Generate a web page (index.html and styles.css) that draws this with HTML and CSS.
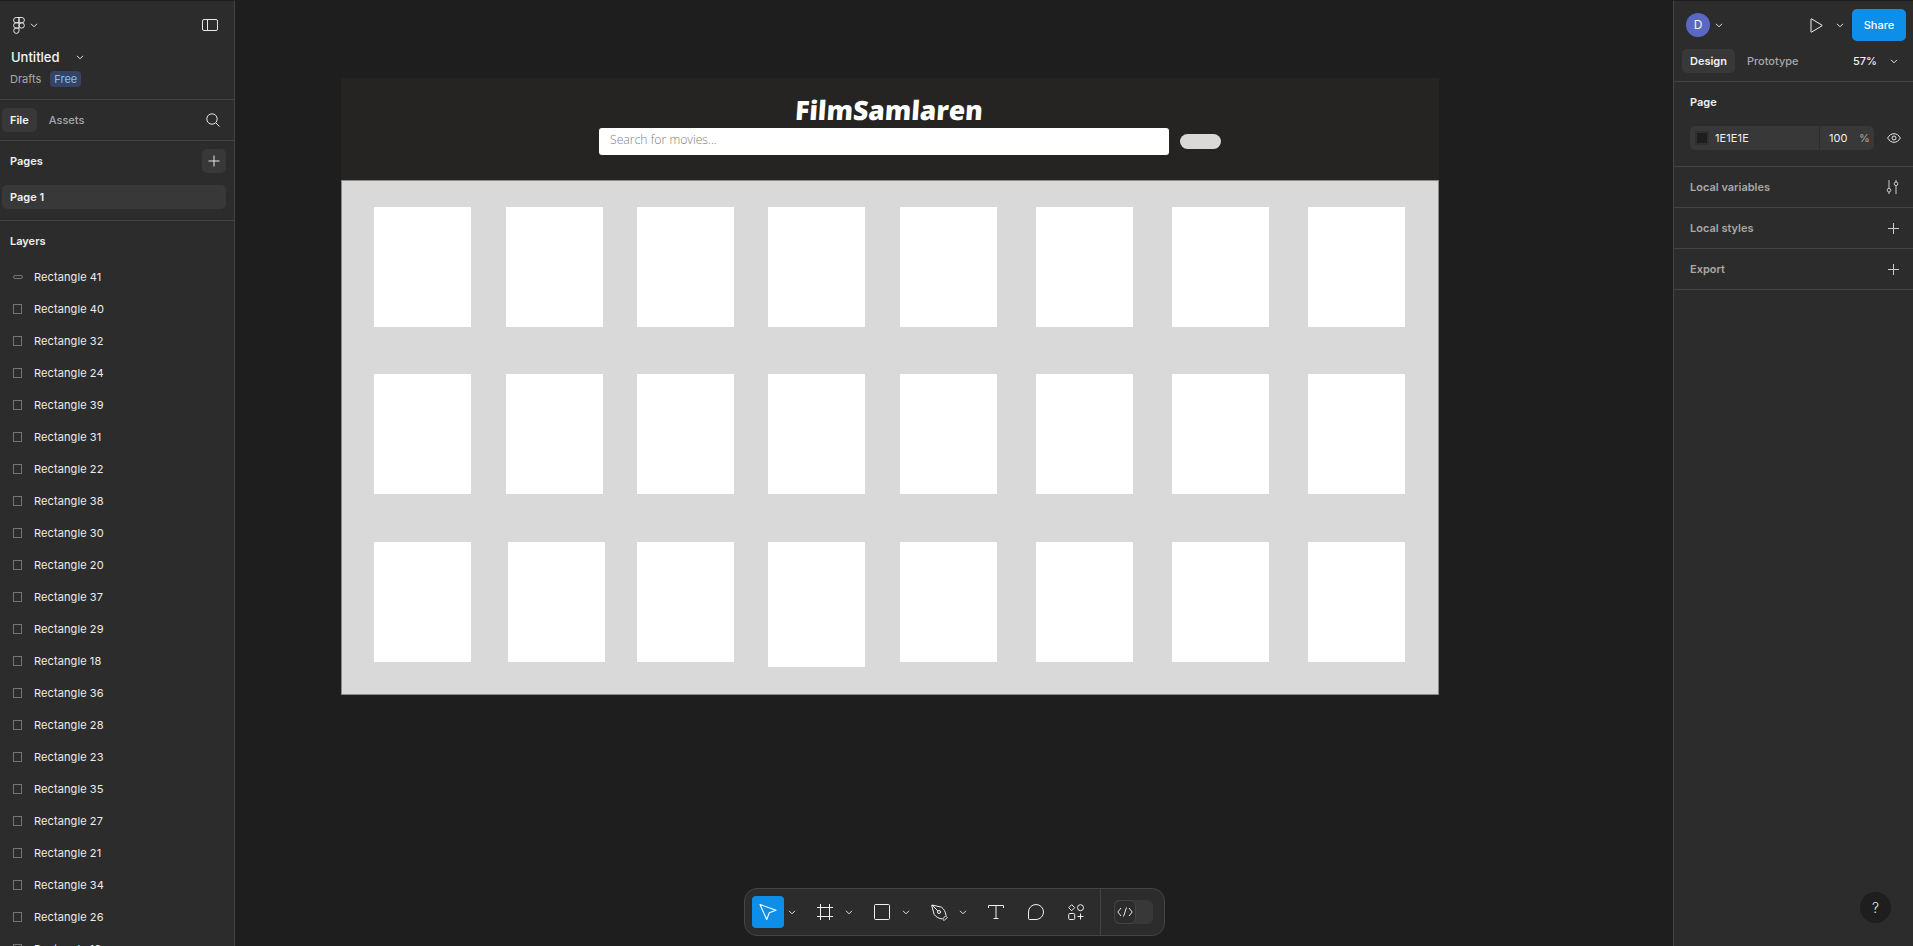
FILE: index.html
```html
<!DOCTYPE html>
<html lang="en">
<head>
  <meta charset="UTF-8">
  <title>Untitled - Figma</title>
  <link rel="stylesheet" href="styles.css">
</head>
<body>
  <div class="app">
    <!-- Left panel -->
    <aside class="left-panel">
      <div class="file-head">
        <div class="logo-row">
          <div class="logo-wrap">
            <svg class="logo" width="12" height="17" viewBox="0 0 12 17" fill="none" stroke="#e6e6e6" stroke-width="1">
              <path d="M6 .5H3.25a2.6 2.6 0 0 0 0 5.3H6z"/>
              <path d="M6 .5h2.75a2.6 2.6 0 0 1 0 5.3H6z"/>
              <path d="M6 5.8H3.25a2.6 2.6 0 0 0 0 5.3H6z"/>
              <circle cx="8.7" cy="8.45" r="2.65"/>
              <path d="M3.25 11.1H6v2.7a2.65 2.65 0 1 1-2.75-2.7z"/>
            </svg>
            <svg class="chev" width="8" height="8" viewBox="0 0 8 8"><path d="M1 2.800l3 3 3-3" fill="none" stroke="#e6e6e6"/></svg>
          </div>
          <svg width="16" height="12" viewBox="0 0 16 12" fill="none" stroke="#e6e6e6"><rect x=".5" y=".5" width="15" height="11" rx="1.500"/><path d="M5.500 .5v11"/></svg>
        </div>
        <div class="title-row">
          <span class="title">Untitled</span>
          <svg class="chev" width="8" height="8" viewBox="0 0 8 8"><path d="M1 2.800l3 3 3-3" fill="none" stroke="#e6e6e6"/></svg>
        </div>
        <div class="sub-row">
          <span class="drafts">Drafts</span>
          <span class="badge">Free</span>
        </div>
      </div>

      <div class="tabs-row">
        <span class="tab tab-active">File</span>
        <span class="tab tab-muted">Assets</span>
        <svg class="search-icon" width="14" height="14" viewBox="0 0 14 14" fill="none" stroke="#e6e6e6"><circle cx="6" cy="6" r="5.200"/><path d="M9.800 9.800l3.700 3.700"/></svg>
      </div>

      <div class="pages">
        <div class="pages-head">
          <span class="section-label">Pages</span>
          <span class="add-page">
            <svg width="12" height="12" viewBox="0 0 12 12" stroke="#e6e6e6"><path d="M6 .5v11M.5 6h11"/></svg>
          </span>
        </div>
        <div class="page-row">Page 1</div>
      </div>

      <div class="layers">
        <div class="section-label layers-label">Layers</div>
        <ul class="layer-list">
          <li class="layer"><i class="layer-icon pill"></i>Rectangle 41</li>
          <li class="layer"><i class="layer-icon"></i>Rectangle 40</li>
          <li class="layer"><i class="layer-icon"></i>Rectangle 32</li>
          <li class="layer"><i class="layer-icon"></i>Rectangle 24</li>
          <li class="layer"><i class="layer-icon"></i>Rectangle 39</li>
          <li class="layer"><i class="layer-icon"></i>Rectangle 31</li>
          <li class="layer"><i class="layer-icon"></i>Rectangle 22</li>
          <li class="layer"><i class="layer-icon"></i>Rectangle 38</li>
          <li class="layer"><i class="layer-icon"></i>Rectangle 30</li>
          <li class="layer"><i class="layer-icon"></i>Rectangle 20</li>
          <li class="layer"><i class="layer-icon"></i>Rectangle 37</li>
          <li class="layer"><i class="layer-icon"></i>Rectangle 29</li>
          <li class="layer"><i class="layer-icon"></i>Rectangle 18</li>
          <li class="layer"><i class="layer-icon"></i>Rectangle 36</li>
          <li class="layer"><i class="layer-icon"></i>Rectangle 28</li>
          <li class="layer"><i class="layer-icon"></i>Rectangle 23</li>
          <li class="layer"><i class="layer-icon"></i>Rectangle 35</li>
          <li class="layer"><i class="layer-icon"></i>Rectangle 27</li>
          <li class="layer"><i class="layer-icon"></i>Rectangle 21</li>
          <li class="layer"><i class="layer-icon"></i>Rectangle 34</li>
          <li class="layer"><i class="layer-icon"></i>Rectangle 26</li>
          <li class="layer"><i class="layer-icon"></i>Rectangle 19</li>
        </ul>
      </div>
    </aside>

    <!-- Canvas with the design frame -->
    <main class="canvas">
      <div class="frame">
        <header class="frame-head">
          <div class="brand">FilmSamlaren</div>
          <div class="search-row">
            <div class="search-box">Search for movies...</div>
            <div class="search-btn"></div>
          </div>
        </header>
        <section class="movie-grid">
          <div class="poster"></div><div class="poster"></div><div class="poster"></div><div class="poster"></div>
          <div class="poster"></div><div class="poster"></div><div class="poster"></div><div class="poster"></div>
          <div class="poster"></div><div class="poster"></div><div class="poster"></div><div class="poster"></div>
          <div class="poster"></div><div class="poster"></div><div class="poster"></div><div class="poster"></div>
          <div class="poster"></div><div class="poster nudged"></div><div class="poster"></div><div class="poster tall"></div>
          <div class="poster"></div><div class="poster"></div><div class="poster"></div><div class="poster"></div>
        </section>
      </div>
    </main>

    <!-- Right panel -->
    <aside class="right-panel">
      <div class="top-row">
        <div class="avatar-wrap">
          <span class="avatar">D</span>
          <svg class="chev" width="8" height="8" viewBox="0 0 8 8"><path d="M1 2.800l3 3 3-3" fill="none" stroke="#e6e6e6"/></svg>
        </div>
        <div class="top-actions">
          <svg width="13" height="15" viewBox="0 0 13 15" fill="none" stroke="#f0f0f0"><path d="M1 1.200v12.600a.4 .4 0 0 0 .6 .3L12 7.800a.35 .35 0 0 0 0-.6L1.600 .9a.4 .4 0 0 0-.6 .3z"/></svg>
          <svg class="chev play-chev" width="8" height="8" viewBox="0 0 8 8"><path d="M1 2.800l3 3 3-3" fill="none" stroke="#e6e6e6"/></svg>
          <span class="share">Share</span>
        </div>
      </div>
      <div class="mode-row">
        <span class="mode mode-active">Design</span>
        <span class="mode mode-muted">Prototype</span>
        <span class="zoom-val">57%</span>
        <svg class="chev zoom-chev" width="8" height="8" viewBox="0 0 8 8"><path d="M1 2.800l3 3 3-3" fill="none" stroke="#e6e6e6"/></svg>
      </div>
      <div class="page-section">
        <div class="section-label">Page</div>
        <div class="fill-row">
          <div class="fill-field">
            <span class="swatch"><span class="swatch-inner"></span></span>
            <span class="hex">1E1E1E</span>
            <span class="opacity">100</span>
            <span class="pct">%</span>
          </div>
          <svg width="14" height="10" viewBox="0 0 14 10" fill="none" stroke="#e6e6e6"><path d="M.6 5C2.200 2.200 4.400 .7 7 .7S11.800 2.200 13.400 5C11.800 7.800 9.600 9.300 7 9.300S2.200 7.800 .6 5z"/><circle cx="7" cy="5" r="2"/></svg>
        </div>
      </div>
      <div class="prop-row">
        <span>Local variables</span>
        <svg width="13" height="14" viewBox="0 0 13 14" fill="none" stroke="#ccc"><path d="M3 0v8.500M3 12v2M10 0v2M10 5.500V14"/><circle cx="3" cy="10.200" r="1.800"/><circle cx="10" cy="3.800" r="1.800"/></svg>
      </div>
      <div class="prop-row">
        <span>Local styles</span>
        <svg width="11" height="11" viewBox="0 0 11 11" stroke="#ccc"><path d="M5.500 0v11M0 5.500h11"/></svg>
      </div>
      <div class="prop-row">
        <span>Export</span>
        <svg width="11" height="11" viewBox="0 0 11 11" stroke="#ccc"><path d="M5.500 0v11M0 5.500h11"/></svg>
      </div>
    </aside>

    <!-- Floating toolbar -->
    <div class="toolbar">
      <div class="tool-group">
        <span class="tool tool-active">
          <svg width="18" height="18" viewBox="0 0 18 18" fill="none" stroke="#fff" stroke-width="1.100" stroke-linejoin="round"><path d="M1 1.500l16 5.800-6.700 2.500-2.600 6.700z"/></svg>
        </span>
        <svg class="tool-chev" width="8" height="8" viewBox="0 0 8 8"><path d="M1 2.800l3 3 3-3" fill="none" stroke="#e6e6e6"/></svg>
      </div>
      <div class="tool-group">
        <span class="tool">
          <svg width="16" height="16" viewBox="0 0 16 16" stroke="#f0f0f0" fill="none"><path d="M3.500 0v16M12.500 0v16M0 3.500h16M0 12.500h16"/></svg>
        </span>
        <svg class="tool-chev" width="8" height="8" viewBox="0 0 8 8"><path d="M1 2.800l3 3 3-3" fill="none" stroke="#e6e6e6"/></svg>
      </div>
      <div class="tool-group">
        <span class="tool">
          <svg width="16" height="16" viewBox="0 0 16 16" stroke="#f0f0f0" fill="none"><rect x=".5" y=".5" width="15" height="15" rx="1"/></svg>
        </span>
        <svg class="tool-chev" width="8" height="8" viewBox="0 0 8 8"><path d="M1 2.800l3 3 3-3" fill="none" stroke="#e6e6e6"/></svg>
      </div>
      <div class="tool-group">
        <span class="tool">
          <svg width="17" height="17" viewBox="0 0 17 17" stroke="#f0f0f0" fill="none" stroke-linejoin="round"><path d="M.7 1.500L1 1l9.500 2.200c2.500 1.800 4 4.500 4.500 8.300l-3.500 3.500c-3.800-.5-6.500-2-8.300-4.500z"/><circle cx="8" cy="8" r="1.500"/><path d="M1 1l5.900 5.900M12 15.500l1.200 1 3-3-1-1.200"/></svg>
        </span>
        <svg class="tool-chev" width="8" height="8" viewBox="0 0 8 8"><path d="M1 2.800l3 3 3-3" fill="none" stroke="#e6e6e6"/></svg>
      </div>
      <div class="tool-set">
        <span class="tool">
          <svg width="16" height="14" viewBox="0 0 16 14" stroke="#f0f0f0" fill="none"><path d="M.5 3V.5h15V3M8 .5v13M5.500 13.500h5"/></svg>
        </span>
        <span class="tool">
          <svg width="16" height="16" viewBox="0 0 16 16" stroke="#f0f0f0" fill="none"><path d="M8 .5a7.500 7.500 0 1 1 0 15H1.500a1 1 0 0 1-1-1V8A7.500 7.500 0 0 1 8 .5z"/></svg>
        </span>
        <span class="tool">
          <svg width="16" height="16" viewBox="0 0 16 16" stroke="#f0f0f0" fill="none"><path d="M3.700 .7l3 3-3 3-3-3z"/><circle cx="12.500" cy="3.700" r="3"/><rect x=".7" y="9.500" width="6" height="6" rx="1"/><path d="M12.500 9.500v6M9.500 12.500h6"/></svg>
        </span>
      </div>
      <div class="code-toggle">
        <div class="code-track">
          <span class="code-knob">
            <svg width="16" height="10" viewBox="0 0 16 10" stroke="#e6e6e6" fill="none"><path d="M4 1L.8 5 4 9M12 1l3.200 4L12 9M9.500 .5l-3 9"/></svg>
          </span>
        </div>
      </div>
    </div>

    <div class="help">?</div>
  </div>
</body>
</html>
```

FILE: styles.css
```css
* { box-sizing: border-box; }

html, body {
  margin: 0;
  height: 100%;
  overflow: hidden;
  background: #1e1e1e;
}

body {
  font-family: Inter, "Liberation Sans", sans-serif;
  font-size: 11px;
  color: #f0f0f0;
}

.app {
  position: relative;
  display: flex;
  width: 1913px;
  height: 946px;
  overflow: hidden;
}

/* panels */
.left-panel {
  width: 235px;
  flex: none;
  background: #2c2c2c;
  border-top: 1px solid #1e1e1e;
  border-right: 1px solid #444;
  overflow: hidden;
}

.right-panel {
  width: 240px;
  flex: none;
  background: #2c2c2c;
  border-top: 1px solid #1e1e1e;
  border-left: 1px solid #444;
}

.file-head {
  height: 99px;
  padding: 8px 0 0 11px;
  border-bottom: 1px solid #444;
}

.logo-row {
  display: flex;
  align-items: center;
  justify-content: space-between;
  height: 32px;
  padding: 0 16px 0 2px;
}

.logo-wrap { display: flex; align-items: center; gap: 5px; }

.title-row {
  display: flex;
  align-items: center;
  gap: 16px;
  height: 20px;
  margin-top: 6px;
}

.title { font-size: 13px; font-weight: 500; color: #f5f5f5; }

.sub-row {
  display: flex;
  align-items: center;
  gap: 9px;
  height: 16px;
  margin-top: 4px;
}

.drafts { color: #a8a8a8; margin-left: -1px; }

.badge {
  height: 16px;
  padding: 0 4px;
  line-height: 16px;
  border-radius: 4px;
  background: #364363;
  color: #7cc0f5;
}

.tabs-row {
  display: flex;
  align-items: center;
  height: 41px;
  padding-left: 2px;
  border-bottom: 1px solid #444;
}

.tab {
  height: 24px;
  padding: 0 8px;
  line-height: 24px;
  border-radius: 5px;
  font-weight: 600;
}

.tab-active { background: #383838; color: #f5f5f5; }
.tab-muted { margin-left: 4px; color: #a8a8a8; font-weight: 500; }
.search-icon { margin-left: auto; margin-right: 14px; }

.pages {
  height: 80px;
  border-bottom: 1px solid #444;
}

.pages-head {
  display: flex;
  align-items: center;
  justify-content: space-between;
  height: 40px;
  margin-bottom: 4px;
  padding: 0 8px 0 10px;
}

.section-label { font-weight: 600; color: #f0f0f0; }

.add-page {
  display: flex;
  align-items: center;
  justify-content: center;
  width: 24px;
  height: 24px;
  border-radius: 5px;
  background: #383838;
}

.page-row {
  height: 24px;
  margin: 0 8px 0 2px;
  padding-left: 8px;
  line-height: 24px;
  border-radius: 5px;
  background: #383838;
  font-weight: 600;
}

.layers-label {
  height: 40px;
  padding-left: 10px;
  line-height: 40px;
}

.layer-list { margin: 0; padding: 0; list-style: none; }

.layer {
  display: flex;
  align-items: center;
  height: 32px;
  padding-left: 13px;
  color: #ededed;
  letter-spacing: .1px;
}

.layer-icon {
  width: 9px;
  height: 10px;
  margin-right: 12px;
  border: 1px solid #757575;
}

.layer-icon.pill {
  height: 4px;
  border-radius: 2px;
  width: 10px;
  margin-right: 11px;
}

/* canvas */
.canvas {
  flex: 1;
  padding: 78px 0 0 106px;
  background: #1e1e1e;
}

.frame { width: 1098px; }

.frame-head {
  height: 102px;
  padding-top: 18px;
  background: #252422;
}

.brand {
  width: max-content;
  height: 32px;
  margin-left: 454px;
  font-family: "Open Sans", sans-serif;
  font-size: 26.5px;
  font-weight: 800;
  line-height: 28px;
  color: #fff;
  transform: skewX(-4deg);
}

.search-row {
  display: flex;
  align-items: center;
  gap: 11px;
  padding-left: 258px;
}

.search-box {
  width: 570px;
  height: 27px;
  padding-left: 11px;
  border-radius: 3px;
  background: #fff;
  color: #808080;
  font-family: "Open Sans", sans-serif;
  font-size: 12.2px;
  font-weight: 300;
  line-height: 23px;
}

.search-btn {
  width: 41px;
  height: 15px;
  border-radius: 8px;
  background: #d9d9d9;
}

.movie-grid {
  display: grid;
  grid-template-columns: 131.5px 131.5px 131px 131.7px 136.3px 136px 136px 97px;
  grid-template-rows: 120px 121px 125px;
  row-gap: 47px;
  align-items: start;
  height: 515px;
  padding: 26px 0 0 32px;
  background: #d9d9d9;
  border: 1px solid #8a8a8a;
}

.poster {
  width: 97px;
  height: 120px;
  background: #fff;
}

.poster.nudged { margin-left: 2px; }
.poster.tall { height: 125px; }

/* right panel */
.top-row {
  display: flex;
  align-items: center;
  justify-content: space-between;
  height: 40px;
  margin: 4px 0;
  padding: 0 7px 0 12px;
}

.avatar-wrap { display: flex; align-items: center; gap: 5px; }

.avatar {
  width: 24px;
  height: 24px;
  border-radius: 50%;
  background: #5a68c4;
  color: #f5f5f5;
  font-size: 12px;
  line-height: 24px;
  text-align: center;
}

.top-actions { display: flex; align-items: center; }
.play-chev { margin: 0 8px 0 13px; }

.share {
  width: 54px;
  height: 32px;
  border-radius: 5px;
  background: #0d8ee9;
  color: #fff;
  font-weight: 500;
  line-height: 32px;
  text-align: center;
}

.mode-row {
  display: flex;
  align-items: center;
  height: 33px;
  padding-left: 8px;
  padding-bottom: 9px;
  border-bottom: 1px solid #444;
}

.mode { height: 24px; padding: 0 8px; line-height: 24px; border-radius: 5px; }
.mode-active { background: #383838; font-weight: 600; }
.mode-muted { margin-left: 4px; color: #a8a8a8; font-weight: 500; }
.zoom-val { margin-left: auto; font-weight: 500; }
.zoom-chev { margin: 0 15px 0 13px; }

.page-section {
  height: 85px;
  padding: 13px 0 0 16px;
  border-bottom: 1px solid #444;
}

.fill-row {
  display: flex;
  align-items: center;
  gap: 13px;
  margin-top: 17px;
}

.fill-field {
  display: flex;
  align-items: center;
  width: 184px;
  height: 24px;
  border-radius: 5px;
  background: #383838;
}

.swatch {
  display: flex;
  align-items: center;
  justify-content: center;
  width: 14px;
  height: 14px;
  margin: 0 6px 0 5px;
  background: #2f2f2f;
}

.swatch-inner { width: 10px; height: 10px; background: #1e1e1e; }

.hex { width: 104px; letter-spacing: .1px; }

.opacity {
  width: 40px;
  height: 24px;
  padding-left: 9px;
  line-height: 24px;
  border-left: 1px solid #2c2c2c;
}

.pct { color: #a8a8a8; }

.prop-row {
  display: flex;
  align-items: center;
  justify-content: space-between;
  height: 41px;
  padding: 0 14px 0 16px;
  border-bottom: 1px solid #444;
  color: #a8a8a8;
  font-weight: 600;
}

/* toolbar and help lie over the canvas */
.toolbar {
  position: absolute;
  left: 744px;
  top: 888px;
  display: flex;
  align-items: center;
  gap: 9px;
  width: 421px;
  height: 48px;
  padding-left: 7px;
  background: #2c2c2c;
  border: 1px solid #444;
  border-radius: 13px;
}

.tool-group { display: flex; align-items: center; }
.tool-set { display: flex; gap: 8px; }

.tool {
  display: flex;
  align-items: center;
  justify-content: center;
  width: 32px;
  height: 32px;
  border-radius: 4px;
}

.tool-active { background: #0d8ee9; }
.tool-chev { margin: 0 4px; }

.code-toggle {
  align-self: stretch;
  display: flex;
  align-items: center;
  margin-left: -1px;
  padding-left: 13px;
  border-left: 1px solid #444;
}

.code-track {
  width: 39px;
  height: 24px;
  border-radius: 6px;
  background: #383838;
}

.code-knob {
  display: flex;
  align-items: center;
  justify-content: center;
  width: 22px;
  height: 24px;
  border: 1px solid #444;
  border-radius: 6px;
  background: #2c2c2c;
}

.help {
  position: absolute;
  left: 1860px;
  top: 892px;
  width: 31px;
  height: 31px;
  border-radius: 50%;
  background: #1e1e1e;
  color: #e6e6e6;
  font-size: 14px;
  font-weight: 300;
  line-height: 31px;
  text-align: center;
}
```
